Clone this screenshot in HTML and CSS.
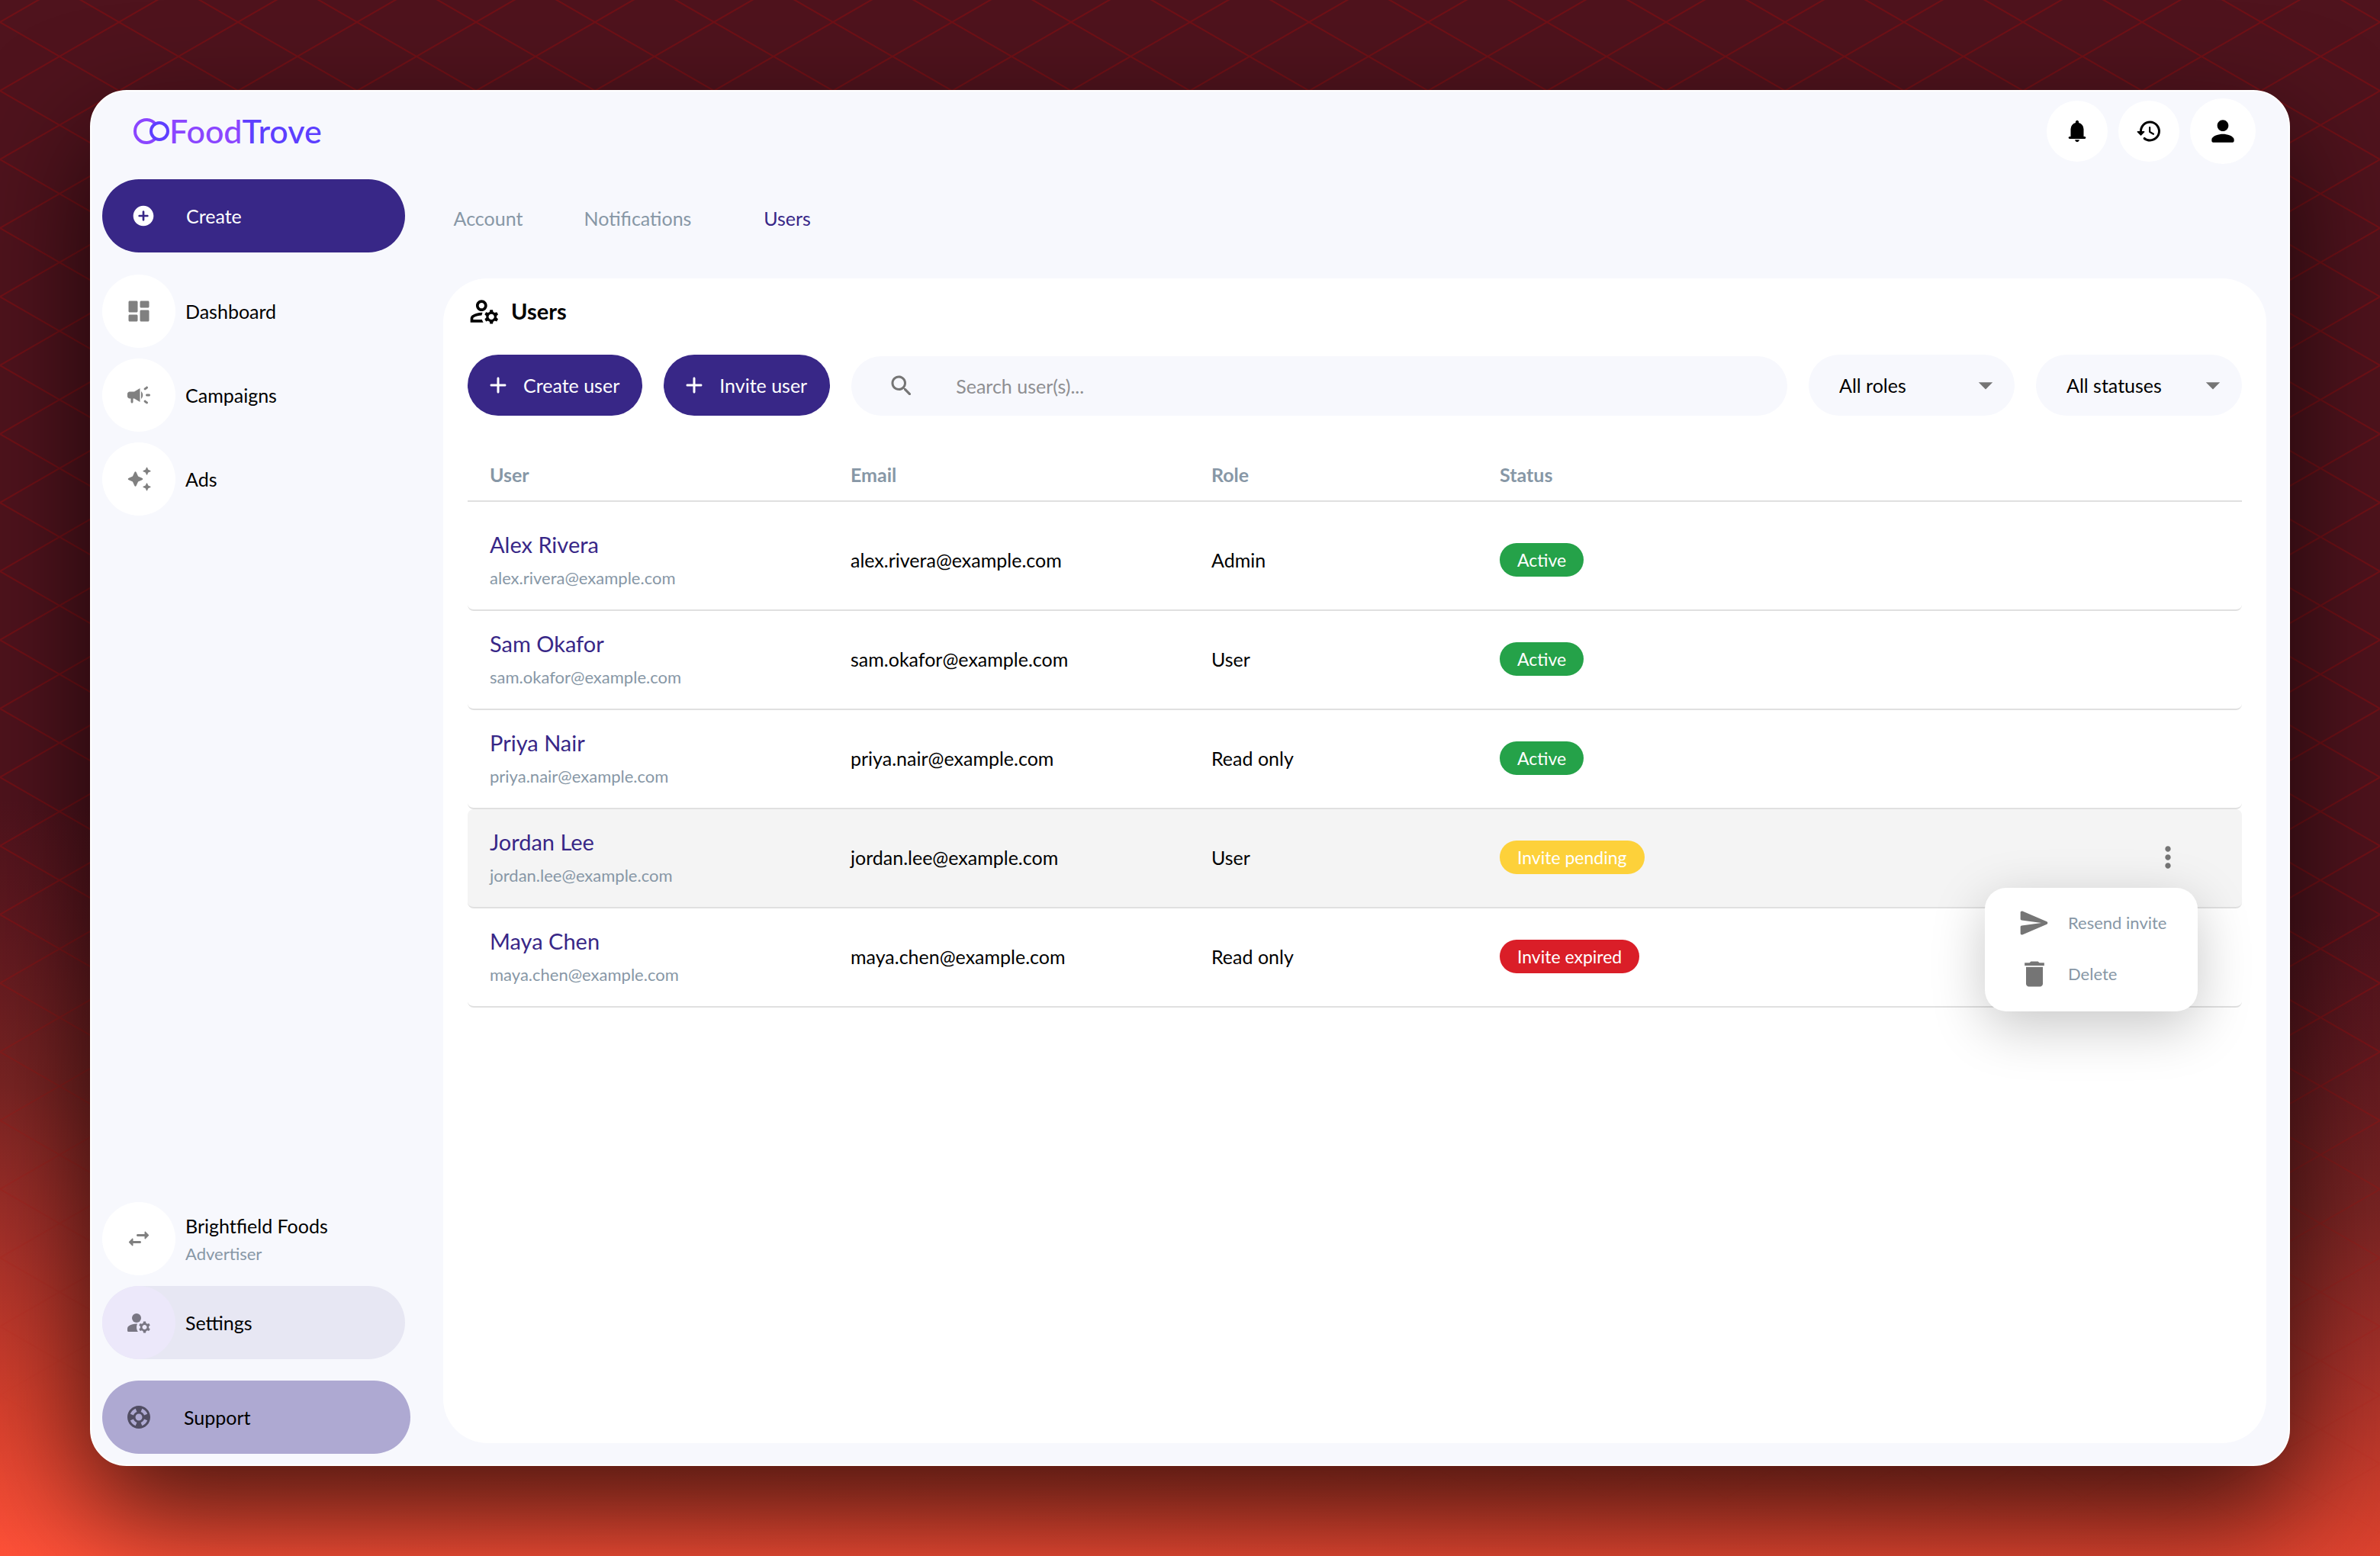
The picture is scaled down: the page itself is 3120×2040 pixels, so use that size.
FILE: index.html
```html
<!DOCTYPE html>
<html lang="en">
<head>
<meta charset="utf-8">
<meta name="viewport" content="width=device-width, initial-scale=1">
<title>FoodTrove – Users</title>
<link rel="stylesheet" href="styles.css">
</head>
<body>
<svg class="backdrop" aria-hidden="true">
  <defs>
    <pattern id="lattice" y="29" width="156" height="90" patternUnits="userSpaceOnUse">
      <path d="M0 0L156 90M0 90L156 0" fill="none" stroke="#ba0a08" stroke-width="2"/>
    </pattern>
  </defs>
  <rect width="100%" height="100%" fill="url(#lattice)"/>
</svg>

<div class="window">
  <header class="topbar">
    <a class="logo" href="#" aria-label="FoodTrove">
      <svg class="logo-mark" viewBox="0 0 48 36" aria-hidden="true">
        <path d="M29.500 8.400A15 15 0 1 0 29.500 27.600" fill="none" stroke="#8b46ff" stroke-width="4"/>
        <circle cx="35" cy="18" r="11" fill="none" stroke="#5d3fff" stroke-width="4"/>
      </svg>
      <span class="logo-food">Food</span><span class="logo-trove">Trove</span>
    </a>
    <div class="top-actions">
      <button class="round" type="button" aria-label="Notifications"><svg class="i34" viewBox="0 0 24 24"><path d="M5 19q-.425 0-.712-.288T4 18t.288-.712T5 17h1v-7q0-2.075 1.250-3.687T10.500 4.200v-.7q0-.625.438-1.062T12 2t1.063.438T13.500 3.500v.7q2 .5 3.250 2.113T18 10v7h1q.425 0 .713.288T20 18t-.288.713T19 19zm7 3q-.825 0-1.412-.587T10 20h4q0 .825-.587 1.413T12 22"/></svg></button>
      <button class="round" type="button" aria-label="History"><svg class="i36" viewBox="0 0 24 24"><path d="M13.260 3C8.170 2.860 4 6.950 4 12H2.210c-.45 0-.67.54-.35.85l2.790 2.800c.2.2.51.2.71 0l2.790-2.800c.31-.31.09-.85-.36-.85H6c0-3.900 3.180-7.050 7.100-7 3.720.05 6.850 3.180 6.900 6.900.05 3.910-3.100 7.100-7 7.100-1.610 0-3.100-.55-4.280-1.480-.4-.31-.96-.28-1.320.08-.42.42-.39 1.130.08 1.490C9 20.290 10.910 21 13 21c5.050 0 9.140-4.170 9-9.260-.13-4.690-4.050-8.610-8.740-8.740zm-.51 5c-.41 0-.75.34-.75.75v3.680c0 .35.19.68.49.86l3.120 1.850c.36.21.82.09 1.030-.26.21-.36.09-.82-.26-1.030l-2.880-1.710v-3.400c0-.4-.34-.74-.75-.74z"/></svg></button>
      <button class="round round-large" type="button" aria-label="Profile"><svg class="i44" viewBox="0 0 24 24"><path d="M12 12c2.210 0 4-1.790 4-4s-1.790-4-4-4-4 1.790-4 4 1.790 4 4 4zm0 2c-2.670 0-8 1.340-8 4v1c0 .55.45 1 1 1h14c.55 0 1-.45 1-1v-1c0-2.660-5.330-4-8-4z"/></svg></button>
    </div>
  </header>

  <div class="body">
    <aside class="sidebar">
      <button class="create" type="button"><svg class="i32" viewBox="0 0 24 24"><path d="M12 2C6.480 2 2 6.480 2 12s4.480 10 10 10 10-4.480 10-10S17.520 2 12 2zm4 11h-3v3c0 .55-.45 1-1 1s-1-.45-1-1v-3H8c-.55 0-1-.45-1-1s.45-1 1-1h3V8c0-.55.45-1 1-1s1 .45 1 1v3h3c.55 0 1 .45 1 1s-.45 1-1 1z"/></svg>Create</button>
      <nav class="nav">
        <a class="nav-item" href="#"><span class="nav-icon"><svg class="i36" viewBox="0 0 24 24"><path d="M4 13h6c.55 0 1-.45 1-1V4c0-.55-.45-1-1-1H4c-.55 0-1 .45-1 1v8c0 .55.45 1 1 1zm0 8h6c.55 0 1-.45 1-1v-4c0-.55-.45-1-1-1H4c-.55 0-1 .45-1 1v4c0 .55.45 1 1 1zm10 0h6c.55 0 1-.45 1-1v-8c0-.55-.45-1-1-1h-6c-.55 0-1 .45-1 1v8c0 .55.45 1 1 1zM13 4v4c0 .55.45 1 1 1h6c.55 0 1-.45 1-1V4c0-.55-.45-1-1-1h-6c-.55 0-1 .45-1 1z"/></svg></span>Dashboard</a>
        <a class="nav-item" href="#"><span class="nav-icon"><svg class="i36" viewBox="0 0 24 24"><path d="M18 12c0 .55.45 1 1 1h2c.55 0 1-.45 1-1s-.45-1-1-1h-2c-.55 0-1 .45-1 1zm-1.410 4.820c-.33.44-.24 1.050.2 1.370.53.39 1.090.81 1.620 1.210.44.33 1.060.24 1.380-.2 0-.01.01-.01.01-.02.33-.44.24-1.060-.2-1.380-.53-.4-1.090-.82-1.610-1.210-.44-.33-1.060-.23-1.390.21 0 .01-.01.02-.01.02zM19.810 4.810c0-.01-.01-.01-.01-.02-.33-.44-.95-.53-1.380-.2-.53.4-1.100.82-1.620 1.220-.44.33-.52.95-.19 1.380 0 .01.01.01.01.02.33.44.94.53 1.380.2.53-.39 1.090-.82 1.620-1.220.43-.32.51-.94.19-1.380zM8 9H4c-1.100 0-2 .9-2 2v2c0 1.100.9 2 2 2h1v3c0 .55.45 1 1 1s1-.45 1-1v-3h1l5 3V6L8 9zm7.500 3c0-1.330-.58-2.530-1.500-3.350v6.690c.92-.81 1.500-2.010 1.500-3.340z"/></svg></span>Campaigns</a>
        <a class="nav-item" href="#"><span class="nav-icon"><svg class="i36" viewBox="0 0 24 24"><path d="M9 5.500q.5 0 .8.7L11.400 9.600l3.400 1.600q.7.300.7.8t-.7.8l-3.400 1.600-1.600 3.400q-.3.700-.8.700t-.8-.7L6.600 14.400l-3.400-1.600q-.7-.3-.7-.8t.7-.8l3.400-1.600 1.600-3.400q.3-.7.800-.7zM19 1.700q.3 0 .4.300l.8 1.900 1.900.8q.3.100.3.400t-.3.400l-1.900.8-.8 1.900q-.1.300-.4.300t-.4-.3l-.8-1.900-1.900-.8q-.3-.1-.3-.4t.3-.4l1.900-.8.8-1.900q.1-.3.400-.3zM19 15.500q.3 0 .4.300l.8 1.900 1.900.8q.3.100.3.400t-.3.400l-1.900.8-.8 1.900q-.1.300-.4.300t-.4-.3l-.8-1.900-1.900-.8q-.3-.1-.3-.4t.3-.4l1.900-.8.8-1.900q.1-.3.400-.3z"/></svg></span>Ads</a>
      </nav>
      <nav class="nav nav-bottom">
        <a class="nav-item" href="#"><span class="nav-icon"><svg class="i36" viewBox="0 0 24 24"><path d="M6.140 11.860l-2.780 2.790c-.19.2-.19.51 0 .71l2.780 2.790c.31.32.85.09.85-.35V16H13c.55 0 1-.45 1-1s-.45-1-1-1H6.990v-1.790c0-.45-.54-.67-.85-.35zm14.510-3.210l-2.780-2.790c-.31-.32-.85-.09-.85.35V8H11c-.55 0-1 .45-1 1s.45 1 1 1h6.010v1.790c0 .45.54.67.85.35l2.780-2.790c.2-.19.2-.51.01-.7z"/></svg></span><span class="account">Brightfield Foods<small>Advertiser</small></span></a>
        <a class="nav-item selected" href="#" aria-current="page"><span class="nav-icon"><svg class="i36" viewBox="0 0 24 24"><circle cx="10" cy="8" r="4"/><path d="M10.670 13.020C10.450 13.010 10.230 13 10 13c-2.420 0-4.680.67-6.610 1.820C2.510 15.340 2 16.320 2 17.350V19q0 1 1 1h8.260C10.470 18.870 10 17.490 10 16c0-1.070.25-2.070.67-2.980z"/><path d="M20.750 16c0-.22-.03-.42-.06-.63l1.140-1.010-1-1.730-1.450.49c-.32-.27-.68-.48-1.080-.63L18 11h-2l-.3 1.490c-.4.15-.76.36-1.080.63l-1.450-.49-1 1.730 1.140 1.010c-.03.21-.06.41-.06.63s.03.42.06.63l-1.140 1.010 1 1.730 1.450-.49c.32.27.68.48 1.080.63L16 21h2l.3-1.490c.4-.15.76-.36 1.080-.63l1.450.49 1-1.730-1.140-1.010c.03-.21.06-.41.06-.63zM17 18c-1.100 0-2-.9-2-2s.9-2 2-2 2 .9 2 2-.9 2-2 2z"/></svg></span>Settings</a>
      </nav>
      <button class="support" type="button"><svg class="i36" viewBox="0 0 24 24"><path d="M12 2C6.480 2 2 6.480 2 12s4.480 10 10 10 10-4.480 10-10S17.520 2 12 2zm7.460 7.120l-2.780 1.150c-.51-1.360-1.580-2.440-2.950-2.940l1.150-2.780c2.100.8 3.770 2.470 4.580 4.570zM12 15c-1.660 0-3-1.340-3-3s1.340-3 3-3 3 1.340 3 3-1.340 3-3 3zM9.130 4.540l1.170 2.780c-1.380.5-2.470 1.590-2.980 2.970L4.540 9.130c.81-2.110 2.480-3.780 4.590-4.590zM4.540 14.870l2.780-1.150c.51 1.380 1.590 2.460 2.970 2.960l-1.170 2.780c-2.100-.81-3.770-2.480-4.580-4.590zm10.340 4.590l-1.150-2.780c1.370-.51 2.450-1.590 2.950-2.970l2.780 1.170c-.81 2.100-2.480 3.770-4.580 4.580z"/></svg>Support</button>
    </aside>

    <main class="main">
      <nav class="tabs" aria-label="Settings sections">
        <a class="tab" href="#">Account</a>
        <a class="tab" href="#">Notifications</a>
        <a class="tab active" href="#" aria-current="page">Users</a>
      </nav>

      <section class="panel">
        <h1 class="title"><svg class="i44" viewBox="0 0 24 24" aria-hidden="true"><path d="M4 18v-.65c0-.34.16-.66.41-.81C6.100 15.530 8.030 15 10 15c.03 0 .05 0 .08.01.1-.7.3-1.370.59-1.980-.22-.02-.44-.03-.67-.03-2.420 0-4.680.67-6.610 1.820C2.510 15.340 2 16.320 2 17.350V20h9.260c-.42-.6-.75-1.280-.97-2H4zM10 12c2.210 0 4-1.790 4-4s-1.790-4-4-4-4 1.790-4 4 1.790 4 4 4zm0-6c1.100 0 2 .9 2 2s-.9 2-2 2-2-.9-2-2 .9-2 2-2z"/><path d="M20.750 16c0-.22-.03-.42-.06-.63l1.140-1.010-1-1.730-1.450.49c-.32-.27-.68-.48-1.080-.63L18 11h-2l-.3 1.490c-.4.15-.76.36-1.080.63l-1.450-.49-1 1.730 1.140 1.010c-.03.21-.06.41-.06.63s.03.42.06.63l-1.140 1.010 1 1.730 1.450-.49c.32.27.68.48 1.080.63L16 21h2l.3-1.490c.4-.15.76-.36 1.080-.63l1.450.49 1-1.730-1.140-1.010c.03-.21.06-.41.06-.63zM17 18c-1.100 0-2-.9-2-2s.9-2 2-2 2 .9 2 2-.9 2-2 2z"/></svg>Users</h1>

        <div class="toolbar">
          <button class="primary" type="button"><svg class="i36" viewBox="0 0 24 24"><path d="M18 13h-5v5c0 .55-.45 1-1 1s-1-.45-1-1v-5H6c-.55 0-1-.45-1-1s.45-1 1-1h5V6c0-.55.45-1 1-1s1 .45 1 1v5h5c.55 0 1 .45 1 1s-.45 1-1 1z"/></svg>Create user</button>
          <button class="primary" type="button"><svg class="i36" viewBox="0 0 24 24"><path d="M18 13h-5v5c0 .55-.45 1-1 1s-1-.45-1-1v-5H6c-.55 0-1-.45-1-1s.45-1 1-1h5V6c0-.55.45-1 1-1s1 .45 1 1v5h5c.55 0 1 .45 1 1s-.45 1-1 1z"/></svg>Invite user</button>
          <label class="search">
            <svg class="i36" viewBox="0 0 24 24" aria-hidden="true"><path d="M15.500 14h-.79l-.28-.27c1.200-1.400 1.820-3.310 1.480-5.340-.47-2.780-2.790-5-5.590-5.340-4.230-.52-7.790 3.040-7.270 7.270.34 2.800 2.560 5.120 5.340 5.590 2.030.34 3.940-.28 5.340-1.480l.27.28v.79l4.250 4.250c.41.41 1.080.41 1.490 0 .41-.41.41-1.080 0-1.490L15.500 14zm-6 0C7.010 14 5 11.990 5 9.500S7.010 5 9.500 5 14 7.010 14 9.500 11.990 14 9.500 14z"/></svg>
            <input type="search" placeholder="Search user(s)..." aria-label="Search users">
          </label>
          <div class="select">
            <select aria-label="Role"><option>All roles</option><option>Admin</option><option>User</option><option>Read only</option></select>
            <svg class="i44" viewBox="0 0 24 24" aria-hidden="true"><path d="M7 10l5 5 5-5z"/></svg>
          </div>
          <div class="select">
            <select aria-label="Status"><option>All statuses</option><option>Active</option><option>Invite pending</option><option>Invite expired</option></select>
            <svg class="i44" viewBox="0 0 24 24" aria-hidden="true"><path d="M7 10l5 5 5-5z"/></svg>
          </div>
        </div>

        <table class="users">
          <colgroup><col class="col-user"><col class="col-email"><col class="col-role"><col class="col-status"><col></colgroup>
          <thead>
            <tr><th scope="col">User</th><th scope="col">Email</th><th scope="col">Role</th><th scope="col">Status</th><td></td></tr>
          </thead>
          <tbody>
            <tr>
              <td><a class="name" href="#">Alex Rivera</a><span class="sub">alex.rivera@example.com</span></td>
              <td>alex.rivera@example.com</td><td>Admin</td><td><span class="badge ok">Active</span></td><td></td>
            </tr>
            <tr>
              <td><a class="name" href="#">Sam Okafor</a><span class="sub">sam.okafor@example.com</span></td>
              <td>sam.okafor@example.com</td><td>User</td><td><span class="badge ok">Active</span></td><td></td>
            </tr>
            <tr>
              <td><a class="name" href="#">Priya Nair</a><span class="sub">priya.nair@example.com</span></td>
              <td>priya.nair@example.com</td><td>Read only</td><td><span class="badge ok">Active</span></td><td></td>
            </tr>
            <tr class="hovered">
              <td><a class="name" href="#">Jordan Lee</a><span class="sub">jordan.lee@example.com</span></td>
              <td>jordan.lee@example.com</td><td>User</td><td><span class="badge pending">Invite pending</span></td>
              <td class="actions">
                <button class="more" type="button" aria-label="More actions" aria-expanded="true"><svg class="i44" viewBox="0 0 24 24"><path d="M12 8c1.100 0 2-.9 2-2s-.9-2-2-2-2 .9-2 2 .9 2 2 2zm0 2c-1.100 0-2 .9-2 2s.9 2 2 2 2-.9 2-2-.9-2-2-2zm0 6c-1.100 0-2 .9-2 2s.9 2 2 2 2-.9 2-2-.9-2-2-2z"/></svg></button>
                <div class="menu" role="menu">
                  <button class="menu-item" type="button" role="menuitem"><svg class="i44" viewBox="0 0 24 24"><path d="M3.400 20.400l17.450-7.480c.81-.35.81-1.490 0-1.840L3.400 3.600c-.66-.29-1.390.2-1.390.91L2 9.120c0 .5.37.93.87.99L17 12 2.870 13.880c-.5.07-.87.5-.87 1l.01 4.610c0 .71.73 1.200 1.390.91z"/></svg>Resend invite</button>
                  <button class="menu-item" type="button" role="menuitem"><svg class="i44" viewBox="0 0 24 24"><path d="M6 19c0 1.100.9 2 2 2h8c1.100 0 2-.9 2-2V7H6v12zM19 4h-3.500l-1-1h-5l-1 1H5v2h14V4z"/></svg>Delete</button>
                </div>
              </td>
            </tr>
            <tr>
              <td><a class="name" href="#">Maya Chen</a><span class="sub">maya.chen@example.com</span></td>
              <td>maya.chen@example.com</td><td>Read only</td><td><span class="badge expired">Invite expired</span></td><td></td>
            </tr>
          </tbody>
        </table>
      </section>
    </main>
  </div>
</div>
</body>
</html>
```

FILE: styles.css
```css
:root {
  --brand: #382787;
  --surface: #f7f8fd;
  --muted: #8797a6;
  --icon: #757575;
  --line: #e0e0e0;
}

* { box-sizing: border-box; }

body {
  margin: 0;
  min-height: 100vh;
  display: flex;
  padding: 118px;
  position: relative;
  font-family: Lato, "Liberation Sans", sans-serif;
  font-size: 25px;
  line-height: 32px;
  color: #000;
  background: linear-gradient(183deg, #4f131d 0%, #4f131d 55%, #5e181f 62%, #792423 72%, #a43029 81%, #d6402d 91%, #ff5138 100%);
}

a { color: inherit; text-decoration: none; }
button, input, select { font: inherit; color: inherit; border: 0; margin: 0; }
button { cursor: pointer; }
svg { display: block; flex: none; fill: currentColor; }

.i32 { width: 32px; height: 32px; }
.i34 { width: 34px; height: 34px; }
.i36 { width: 36px; height: 36px; }
.i44 { width: 44px; height: 44px; }

.backdrop {
  position: absolute;
  inset: 0;
  width: 100%;
  height: 100%;
  opacity: .3;
  -webkit-mask-image: linear-gradient(183deg, #000 60%, transparent 92%);
  mask-image: linear-gradient(183deg, #000 60%, transparent 92%);
}

.window {
  position: relative;
  flex: 1;
  display: flex;
  flex-direction: column;
  border: 2px solid #fff;
  border-radius: 48px;
  background: var(--surface);
  box-shadow: 0 60px 150px rgba(0, 0, 0, .68);
}

.topbar {
  display: flex;
  align-items: center;
  justify-content: space-between;
  height: 104px;
  padding: 0 43px 0 54px;
}

.logo {
  display: flex;
  align-items: center;
  font-size: 43px;
  line-height: 52px;
  font-weight: 500;
}
.logo-mark { width: 48px; height: 36px; }
.logo-food { color: #8b46ff; }
.logo-trove { color: #5d3fff; }

.top-actions { display: flex; align-items: center; gap: 14px; }

.round {
  display: grid;
  place-items: center;
  width: 80px;
  height: 80px;
  padding: 0;
  border-radius: 50%;
  background: #fff;
}
.round-large { width: 86px; height: 86px; }

.body { flex: 1; display: flex; }

.sidebar {
  flex: none;
  display: flex;
  flex-direction: column;
  width: 422px;
  padding: 11px 4px 14px 14px;
}

.create, .support {
  display: flex;
  align-items: center;
  height: 96px;
  border-radius: 48px;
  text-align: left;
}
.create {
  gap: 40px;
  width: 397px;
  padding: 0 38px;
  background: var(--brand);
  color: #fff;
}
.support {
  gap: 41px;
  width: 404px;
  margin-top: 28px;
  padding: 0 30px;
  background: #aea9d2;
}
.support svg { color: #514d63; }

.nav {
  display: flex;
  flex-direction: column;
  gap: 14px;
  width: 397px;
  margin-top: 29px;
}
.nav-bottom { margin-top: auto; }

.nav-item {
  display: flex;
  align-items: center;
  gap: 13px;
  height: 96px;
  border-radius: 48px;
}
.nav-icon {
  display: grid;
  place-items: center;
  width: 96px;
  height: 96px;
  border-radius: 50%;
  background: #fff;
  color: #808080;
}
.nav-item.selected { background: #e7e7f3; }
.selected .nav-icon { background: #ece8fa; color: #797683; }

.account { display: flex; flex-direction: column; gap: 5px; padding-top: 3px; }
.account small { font-size: 22px; color: var(--muted); }

.main {
  flex: 1;
  min-width: 0;
  display: flex;
  flex-direction: column;
  padding: 0 29px 28px 0;
}

.tabs { display: flex; height: 124px; margin-bottom: 17px; }
.tab {
  display: grid;
  place-items: center;
  width: 196px;
  color: var(--muted);
}
.tab.active { color: var(--brand); }

.panel {
  flex: 1;
  margin-left: 39px;
  padding: 22px 32px 32px;
  border-radius: 58px;
  background: #fff;
}

.title {
  display: flex;
  align-items: center;
  gap: 13px;
  margin: 0 0 36px;
  font-size: 29px;
  line-height: 42px;
  height: 42px;
  font-weight: 700;
}

.toolbar { display: flex; align-items: flex-end; gap: 28px; }

.primary {
  display: flex;
  align-items: center;
  gap: 15px;
  height: 80px;
  padding: 0 30px 0 22px;
  border-radius: 40px;
  background: var(--brand);
  color: #fff;
  white-space: nowrap;
}

.search {
  flex: 1;
  display: flex;
  align-items: center;
  gap: 53px;
  height: 78px;
  padding: 0 48px;
  border-radius: 39px;
  background: var(--surface);
  color: var(--icon);
}
.search input {
  flex: 1;
  min-width: 0;
  padding: 0;
  background: none;
  outline: 0;
  color: #000;
  appearance: none;
}
.search input::placeholder { color: #8e8f92; opacity: 1; }

.select { position: relative; width: 270px; }
.select select {
  width: 100%;
  height: 80px;
  padding: 0 60px 0 40px;
  border-radius: 40px;
  background: var(--surface);
  appearance: none;
}
.select svg {
  position: absolute;
  right: 16px;
  top: 18px;
  color: var(--icon);
  pointer-events: none;
}

.users {
  width: 100%;
  margin-top: 42px;
  table-layout: fixed;
  border-collapse: separate;
  border-spacing: 0;
}
.col-user, .col-email { width: 473px; }
.col-role { width: 378px; }
.col-status { width: 472px; }

.users th, .users td { padding: 0 0 0 29px; text-align: left; }
.users thead th, .users thead td {
  height: 71px;
  border-bottom: 2px solid var(--line);
  color: var(--muted);
}
.users tbody::before { content: ""; display: block; height: 13px; }
.users tbody td {
  height: 130px;
  padding-bottom: 2px;
  border-bottom: 2px solid var(--line);
}
.users tbody td:first-child { border-radius: 8px 0 0 8px; }
.users tbody td:last-child { border-radius: 0 8px 8px 0; }
.hovered td { background: #f4f4f4; }

.name {
  display: block;
  font-size: 29px;
  line-height: 40px;
  color: var(--brand);
}
.sub {
  display: block;
  padding-top: 8px;
  font-size: 22px;
  line-height: 32px;
  color: var(--muted);
}

.badge {
  display: inline-block;
  padding: 0 23px;
  border-radius: 22px;
  font-size: 23px;
  line-height: 44px;
  vertical-align: middle;
  color: #fff;
}
.ok { background: #25a249; }
.pending { background: #fdd13a; }
.expired { background: #da1e28; }

.users .actions { position: relative; padding: 0 69px 2px 0; }
.more {
  display: grid;
  place-items: center;
  width: 56px;
  height: 56px;
  margin-left: auto;
  padding: 0;
  background: none;
  color: var(--icon);
}
.menu {
  position: absolute;
  top: 103px;
  right: 58px;
  z-index: 1;
  width: 279px;
  padding: 12px 0 16px;
  border-radius: 28px;
  background: #fff;
  box-shadow: 0 20px 70px rgba(0, 0, 0, .22);
}
.menu-item {
  display: flex;
  align-items: center;
  gap: 22px;
  width: 100%;
  height: 67px;
  padding: 0 0 0 43px;
  background: none;
  font-size: 22px;
  color: var(--muted);
  white-space: nowrap;
}
.menu-item svg { color: var(--icon); }
```
